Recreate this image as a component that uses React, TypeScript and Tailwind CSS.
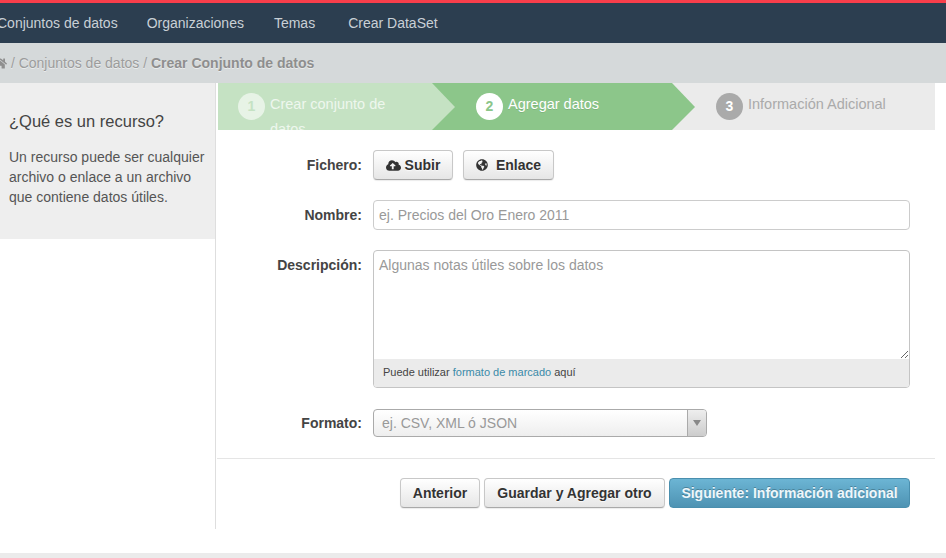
import { FaCloudUploadAlt, FaGlobeAmericas, FaHome } from "react-icons/fa";

const btn =
  "h-[30px] rounded-[4px] border border-[#c8c8c8] border-b-[#a9a9a9] bg-gradient-to-b from-white to-[#e6e6e6] text-[14px] font-bold text-[#333] flex items-center justify-center shadow-[0_1px_1px_rgba(0,0,0,0.08)] [text-shadow:0_1px_1px_rgba(255,255,255,0.75)]";
const label = "w-[145px] shrink-0 text-right text-[14px] font-bold text-[#444] mr-[11px]";

function Arrow({ color }: { color: string }) {
  return (
    <svg className="absolute top-0 left-full z-10" width="23" height="47" viewBox="0 0 23 47">
      <polygon points="0,0 23,24 0,47" fill={color} />
    </svg>
  );
}

export default function App() {
  return (
    <div className="h-[558px] w-[946px] overflow-hidden bg-white flex flex-col font-['Liberation_Sans',Arial,sans-serif] text-[14px] text-[#444]">
      <div className="h-[3px] bg-[#f93e4b]" />
      <nav className="h-[40px] shrink-0 bg-[#2c3e50] flex items-center text-[14px] text-[#c9d0d6] -ml-[3px]">
        <a className="mr-[29px]">Conjuntos de datos</a>
        <a className="mr-[30px]">Organizaciones</a>
        <a className="mr-[33px]">Temas</a>
        <a>Crear DataSet</a>
      </nav>
      <div className="h-[40px] shrink-0 bg-[#d5d9da] flex items-center text-[14px] text-[#9c9c9c] -ml-[6px] pl-0 whitespace-pre [text-shadow:0_1px_0_rgba(255,255,255,0.5)]">
        <FaHome className="text-[13px] text-[#8f8f8f]" />
        <span> / Conjuntos de datos / </span>
        <b className="text-[#8e8e8e]">Crear Conjunto de datos</b>
      </div>

      <div className="flex h-[446px] shrink-0">
        <aside className="w-[216px] shrink-0 border-r border-[#dedede]">
          <div className="h-[156px] bg-[#eeeeee] pl-[9px] pr-[10px] pt-[26px]">
            <h2 className="text-[16.5px] leading-[24px] text-[#444] font-normal">¿Qué es un recurso?</h2>
            <p className="mt-[14px] text-[14px] leading-[20px] text-[#555]">
              Un recurso puede ser cualquier archivo o enlace a un archivo que contiene datos útiles.
            </p>
          </div>
        </aside>

        <main className="w-[719px] shrink-0">
          <div className="flex h-[47px] ml-[2px] bg-[#ebebeb]">
            <div className="relative w-[214px] bg-[#c5e2c3] z-20 shrink-0">
              <div className="h-[47px] overflow-hidden pl-[20px] pt-[10px] flex text-[#eef7ee]">
                <span className="w-[27px] h-[27px] shrink-0 rounded-full bg-[#e7f3e6] text-[#c5e2c3] font-bold text-[14px] flex items-center justify-center">1</span>
                <span className="ml-[5px] w-[130px] leading-[25px] text-[14.5px] -mt-[1px]">Crear conjunto de datos</span>
              </div>
              <Arrow color="#c5e2c3" />
            </div>
            <div className="relative w-[240px] bg-[#8cc68a] z-10 shrink-0">
              <div className="h-[47px] pl-[44px] pt-[10px] flex text-white">
                <span className="w-[27px] h-[27px] shrink-0 rounded-full bg-white text-[#8cc68a] font-bold text-[14px] flex items-center justify-center">2</span>
                <span className="ml-[5px] leading-[25px] text-[14.5px] -mt-[1px] [text-shadow:0_1px_0_rgba(0,0,0,0.1)]">Agregar datos</span>
              </div>
              <Arrow color="#8cc68a" />
            </div>
            <div className="pl-[44px] pt-[10px] flex text-[#aaaaaa]">
              <span className="w-[27px] h-[27px] shrink-0 rounded-full bg-[#aaaaaa] text-white font-bold text-[14px] flex items-center justify-center">3</span>
              <span className="ml-[5px] leading-[25px] text-[14.5px] -mt-[1px]">Información Adicional</span>
            </div>
          </div>

          <form className="pt-[20px] pl-[1px]">
            <div className="flex items-center h-[30px]">
              <label className={label}>Fichero:</label>
              <button type="button" className={`${btn} w-[80px] gap-[4px]`}>
                <FaCloudUploadAlt className="text-[15px]" /> Subir
              </button>
              <button type="button" className={`${btn} w-[91px] ml-[10px] gap-[8px]`}>
                <FaGlobeAmericas className="text-[12px]" /> Enlace
              </button>
            </div>

            <div className="flex items-center h-[30px] mt-[20px]">
              <label className={label}>Nombre:</label>
              <input
                placeholder="ej. Precios del Oro Enero 2011"
                className="w-[537px] h-[30px] rounded-[4px] border border-[#cccccc] px-[5px] text-[14px] outline-none placeholder:text-[#999]"
              />
            </div>

            <div className="flex mt-[20px]">
              <label className={`${label} pt-[5px]`}>Descripción:</label>
              <div className="w-[537px] h-[138px] rounded-[4px] border border-[#c4c4c4] flex flex-col overflow-hidden">
                <textarea
                  placeholder="Algunas notas útiles sobre los datos"
                  className="w-full h-[108px] shrink-0 px-[5px] py-[4px] text-[14px] leading-[20px] outline-none placeholder:text-[#999] block"
                />
                <div className="flex-1 bg-[#ebebeb] pl-[9px] text-[11px] leading-[27px] text-[#444] -mt-[0px]">
                  Puede utilizar <a className="text-[#3a8aa8]">formato de marcado</a> aquí
                </div>
              </div>
            </div>

            <div className="flex items-center h-[28px] mt-[21px]">
              <label className={label}>Formato:</label>
              <div className="w-[334px] h-[28px] rounded-[4px] border border-[#aaaaaa] bg-gradient-to-b from-white to-[#eeeeee] flex items-center overflow-hidden">
                <span className="flex-1 pl-[8px] text-[14px] text-[#999]">ej. CSV, XML ó JSON</span>
                <span className="w-[19px] h-full border-l border-[#aaaaaa] bg-gradient-to-b from-[#eeeeee] to-[#cccccc] flex items-center justify-center">
                  <svg width="8" height="6" viewBox="0 0 8 6">
                    <polygon points="0,0 8,0 4,6" fill="#888888" />
                  </svg>
                </span>
              </div>
            </div>

            <div className="mt-[21px] border-t border-[#e5e5e5] h-[71px] pt-[19px] flex justify-end pr-[25px] gap-[4px]">
              <button type="button" className={`${btn} w-[80px]`}>Anterior</button>
              <button type="button" className={`${btn} w-[181px]`}>Guardar y Agregar otro</button>
              <button
                type="button"
                className="h-[30px] w-[241px] rounded-[4px] border border-[#4a8fae] bg-gradient-to-b from-[#6cb5d4] to-[#4e93b3] text-[14px] font-bold text-[#eef7fb] [text-shadow:0_-1px_0_rgba(0,0,0,0.25)] flex items-center justify-center"
              >
                Siguiente: Información adicional
              </button>
            </div>
          </form>
        </main>
      </div>

      <div className="mt-[24px] flex-1 bg-[#ebebeb]" />
    </div>
  );
}
